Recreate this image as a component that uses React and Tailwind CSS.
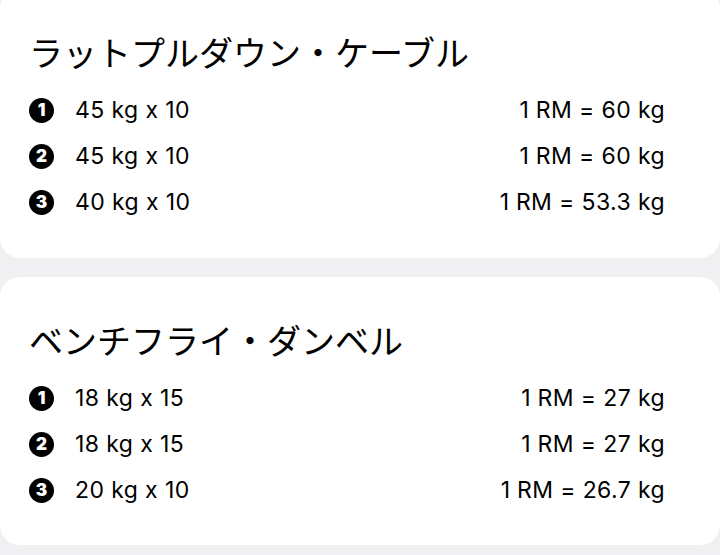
const exercises = [
  {
    name: "ラットプルダウン・ケーブル",
    sets: [
      { w: 45, reps: 10, rm: "60" },
      { w: 45, reps: 10, rm: "60" },
      { w: 40, reps: 10, rm: "53.3" },
    ],
  },
  {
    name: "ベンチフライ・ダンベル",
    sets: [
      { w: 18, reps: 15, rm: "27" },
      { w: 18, reps: 15, rm: "27" },
      { w: 20, reps: 10, rm: "26.7" },
    ],
  },
];

function SetRow({ index, set }) {
  return (
    <div className="flex h-[46px] items-center justify-between">
      <div className="flex items-center gap-[21px]">
        <span className="flex h-[25px] w-[25px] items-center justify-center rounded-full bg-black text-[17px] font-black leading-none text-white">
          {index}
        </span>
        <span className="text-[23px] tracking-[0.4px] text-black">
          {set.w} kg x {set.reps}
        </span>
      </div>
      <span className="text-[23px] tracking-[0.4px] text-black">
        1<span className="tracking-normal"> </span>RM = {set.rm} kg
      </span>
    </div>
  );
}

function ExerciseCard({ exercise, className = "" }) {
  return (
    <div className={`rounded-[20px] bg-white pl-[29px] pr-[55px] pt-[45px] ${className}`}>
      <h2 className="mb-[13px] h-[40px] text-[34px] leading-[40px] text-black">{exercise.name}</h2>
      {exercise.sets.map((s, i) => (
        <SetRow key={i} index={i + 1} set={s} />
      ))}
    </div>
  );
}

export default function App() {
  return (
    <div
      className="h-[555px] w-[720px] overflow-hidden bg-[#f0f0f2]"
      style={{ fontFamily: 'Inter, "Noto Sans CJK JP", sans-serif' }}
    >
      <div className="-mt-[11px] flex flex-col gap-[19px]">
        <ExerciseCard exercise={exercises[0]} className="pb-[33px]" />
        <ExerciseCard exercise={exercises[1]} className="pb-[32px]" />
      </div>
    </div>
  );
}
